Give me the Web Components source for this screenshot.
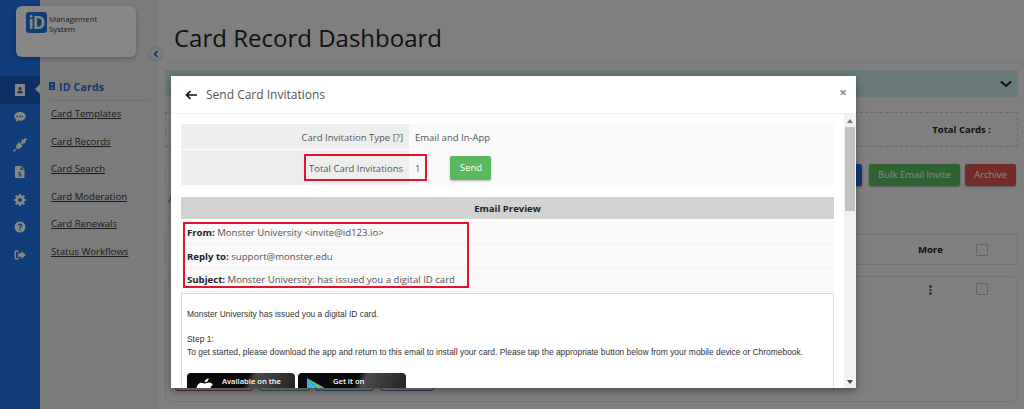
<!DOCTYPE html>
<html lang="en">
<head>
    <meta charset="UTF-8">
    <title>Card Record Dashboard</title>
    <style>
        html, body {
            margin: 0;
            height: 100%;
            overflow: hidden;
            font-family: "Open Sans", sans-serif;
            background: #f0f0f0;
        }
    </style>
</head>
<body>
    <admin-shell>
        <side-rail slot="rail"></side-rail>
        <sub-nav slot="nav"></sub-nav>
        <card-dashboard slot="main"></card-dashboard>
        <invite-modal slot="overlay"></invite-modal>
    </admin-shell>

    <!-- Page shell -->
    <template id="admin-shell-template">
        <style>
            :host { display: block; height: 409px; position: relative; overflow: hidden; }
            .grid { display: grid; grid-template-columns: 40px 117px 1fr; height: 100%; }
            .backdrop { position: absolute; inset: 0; background: rgba(0, 0, 0, .47); }
            .logo {
                position: absolute; left: 16px; top: 6px; width: 120px; height: 51px;
                box-sizing: border-box; padding: 6px 10px;
                display: flex; gap: 2px; align-items: flex-start;
                background: #fff; border-radius: 6px; box-shadow: 0 2px 5px rgba(0,0,0,.25);
            }
            .mark {
                width: 21px; height: 21px; border-radius: 3px; background: #1a75d2; color: #fff;
                font: 700 17px/21px "Open Sans", sans-serif; text-align: center; letter-spacing: -1px;
            }
            .logo span { font-size: 7.800px; line-height: 10px; color: #333; padding-top: 2px; }
            .toggle {
                position: absolute; left: 150px; top: 48px; width: 12px; height: 12px;
                border-radius: 50%; background: #e6eef8; box-shadow: 0 0 2px rgba(0,0,0,.4);
                display: flex; align-items: center; justify-content: center;
            }
        </style>
        <div class="grid">
            <slot name="rail"></slot>
            <slot name="nav"></slot>
            <slot name="main"></slot>
        </div>
        <div class="logo">
            <div class="mark">iD</div>
            <span>Management<br>System</span>
        </div>
        <div class="toggle">
            <svg width="6" height="8" viewBox="0 0 6 8"><path d="M4.500 1 1.500 4l3 3" fill="none" stroke="#1a5fc0" stroke-width="1.600"/></svg>
        </div>
        <div class="backdrop"></div>
        <slot name="overlay"></slot>
    </template>

    <!-- Icon rail -->
    <template id="side-rail-template">
        <style>
            :host { display: flex; flex-direction: column; background: #2273e8; padding-top: 76px; }
            .item { height: 27.500px; display: flex; align-items: center; justify-content: center; position: relative; }
            .item.active { background: #1a59b8; }
            .item.active::after {
                content: ""; position: absolute; right: 0; top: 8px;
                border: 5px solid transparent; border-right-color: #f0f0f0; border-left-width: 0;
            }
            svg { width: 12px; height: 12px; fill: #fff; display: block; }
            .plug { width: 14px; height: 14px; }
        </style>
        <div class="item active">
            <svg viewBox="0 0 12 12"><path fill-rule="evenodd" d="M2 0h8a1 1 0 0 1 1 1v10a1 1 0 0 1-1 1H2a1 1 0 0 1-1-1V1a1 1 0 0 1 1-1Zm4 3a1.600 1.600 0 1 0 0 3.200A1.600 1.600 0 0 0 6 3Zm-2.600 5v1.300h5.200V8c0-.7-1-1.200-2.600-1.200S3.400 7.300 3.400 8Z"/></svg>
        </div>
        <div class="item">
            <svg viewBox="0 0 12 12"><path fill-rule="evenodd" d="M6 1c3.200 0 5.700 1.900 5.700 4.400S9.200 9.700 6 9.700c-.6 0-1.200-.1-1.700-.2L1.600 11l.7-2.500C1 7.700.3 6.600.3 5.400.3 2.900 2.800 1 6 1ZM3.500 4.700a.8.8 0 1 0 0 1.500.8.8 0 0 0 0-1.500Zm2.500 0a.8.8 0 1 0 0 1.500.8.8 0 0 0 0-1.500Zm2.500 0a.8.8 0 1 0 0 1.500.8.8 0 0 0 0-1.500Z"/></svg>
        </div>
        <div class="item">
            <svg class="plug" viewBox="0 0 12 12"><path d="M10.700 0 12 1.300 10.300 3l.6.600-1.100 1.100-.4-.4-1.300 1.300-.8-.8L8.600 3.500 8.500 3.400 7.200 4.700l-.8-.8 1.300-1.300-.4-.4L8.400 1l.6.600ZM5.300 3.700l3 3-1.700 1.700c-1 1-2.300 1.200-3.300.6L1.200 12 0 10.800l3-2.100c-.6-1-.4-2.300.6-3.300Z"/></svg>
        </div>
        <div class="item">
            <svg viewBox="0 0 12 12"><path fill-rule="evenodd" d="M2 0h5l3.500 3.500V11a1 1 0 0 1-1 1H2a1 1 0 0 1-1-1V1a1 1 0 0 1 1-1Zm4.500 1v3H10ZM5.500 5.500v.7c-.8.1-1.300.6-1.300 1.200 0 1.400 2.300 1 2.300 1.700 0 .3-.3.4-.8.4-.4 0-.9-.1-1.300-.3v.9c.3.1.7.2 1.100.2v.7h.8v-.7c.8-.1 1.300-.6 1.300-1.300 0-1.400-2.300-1-2.300-1.600 0-.3.3-.4.7-.4.3 0 .7.100 1 .2v-.8c-.3-.1-.6-.2-.9-.2v-.7Z"/></svg>
        </div>
        <div class="item">
            <svg viewBox="0 0 12 12"><path fill-rule="evenodd" d="M5 0h2l.3 1.600 1 .4L9.700 1l1.300 1.300-1 1.400.4 1L12 5v2l-1.600.3-.4 1 1 1.400L9.700 11l-1.400-1-1 .4L7 12H5l-.3-1.600-1-.4-1.400 1L1 9.700l1-1.400-.4-1L0 7V5l1.600-.3.4-1-1-1.400L2.300 1l1.400 1 1-.4ZM6 4a2 2 0 1 0 0 4 2 2 0 0 0 0-4Z"/></svg>
        </div>
        <div class="item">
            <svg viewBox="0 0 12 12"><path fill-rule="evenodd" d="M6 .5a5.500 5.500 0 1 1 0 11 5.500 5.500 0 0 1 0-11Zm-.7 7.300v1.500h1.500V7.800Zm.8-5.300c-1.300 0-2.200.7-2.300 1.900l1.400.2c.1-.6.400-.9.900-.9.400 0 .7.300.7.600 0 .4-.2.600-.7 1-.6.500-.8.900-.8 1.800h1.400c0-.5.100-.7.600-1.100.7-.5 1-1 1-1.700 0-1.100-.9-1.800-2.200-1.800Z"/></svg>
        </div>
        <div class="item">
            <svg viewBox="0 0 12 12"><path d="M4.500 1.500H2a1.500 1.500 0 0 0-1.500 1.500v6A1.500 1.500 0 0 0 2 10.500h2.500V9H2V3h2.500ZM7.500 2 12 6l-4.500 4V7.700H4V4.300h3.500Z"/></svg>
        </div>
    </template>

    <!-- Section links -->
    <template id="sub-nav-template">
        <style>
            :host { display: block; background: #e9e9e9; padding: 79px 5px 0 9px; border-right: 1px solid #dcdcdc; box-sizing: border-box; }
            .head {
                display: flex; align-items: flex-start; gap: 4px; height: 21px; line-height: 16px;
                border-bottom: 1px solid #d2d2d2;
                font-size: 10.500px; font-weight: 700; color: #1f6ae0; letter-spacing: .2px;
            }
            .head svg { width: 6px; height: 8px; fill: #1f6ae0; margin-top: 3px; }
            a {
                display: block; margin: 0 0 0 2px; height: 27.500px;
                font-size: 9.600px; line-height: 26px; color: #333; text-decoration: underline;
            }
        </style>
        <div class="head">
            <svg viewBox="0 0 6 8"><path fill-rule="evenodd" d="M0 0h6v8H0Zm3 1.500a1 1 0 1 0 0 2 1 1 0 0 0 0-2ZM1.300 6.500h3.400V5.500H1.300Z"/></svg>
            ID Cards
        </div>
        <a>Card Templates</a>
        <a>Card Records</a>
        <a>Card Search</a>
        <a>Card Moderation</a>
        <a>Card Renewals</a>
        <a>Status Workflows</a>
    </template>

    <!-- Dashboard behind the dialog -->
    <template id="card-dashboard-template">
        <style>
            :host { display: block; padding: 0 6px 0 8px; background: #f0f0f0; color: #222; font-size: 9.500px; min-width: 0; }
            h1 {
                margin: 0 -6px 0 1px; padding-left: 8px; height: 63px; box-sizing: border-box;
                font-size: 24px; font-weight: 400; line-height: 76px; color: #222; border-bottom: 1px solid #e2e2e2;
            }
            .bar {
                margin-top: 7px; height: 27px; background: #c6e6e6;
                display: flex; align-items: center; justify-content: flex-end; padding-right: 6px;
            }
            .stats {
                margin-top: 15px; height: 35px; box-sizing: border-box; border: 1px dashed #c4c4c4;
                display: flex; align-items: center; justify-content: flex-end; padding-right: 26px;
                font-weight: 700;
            }
            .actions { margin-top: 17px; height: 22px; display: flex; gap: 5px; padding-right: 2px; }
            .actions .ghost { width: 40px; border: 1px solid #ddd; border-radius: 3px; margin-right: auto; box-sizing: border-box; }
            .actions div { border-radius: 2px; color: #fff; line-height: 22px; text-align: center; box-shadow: 0 1px 2px rgba(0,0,0,.3); }
            .actions .ghost { box-shadow: none; }
            .blue { background: #1f6ae0; width: 40px; margin-right: 2px; }
            .green { background: #5cb85c; width: 91px; }
            .red { background: #d9534f; width: 51px; }
            .link { height: 48px; box-sizing: border-box; padding: 6px 0 0 3px; color: #3366dd; line-height: 16px; }
            .thead {
                height: 31px; box-sizing: border-box; border: 1px solid #d9d9d9;
                display: grid; grid-template-columns: 1fr 58px 41px; align-items: center; font-weight: 700;
            }
            .tile {
                margin-top: 11px; height: 126px; box-sizing: border-box; border: 1px solid #d9d9d9; border-radius: 6px;
                display: flex; flex-direction: column; justify-content: space-between; padding: 6px 29px 10px 9px;
            }
            .tile .top { display: flex; justify-content: flex-end; align-items: flex-start; gap: 44px; }
            .box { width: 12px; height: 12px; box-sizing: border-box; border: 1px solid #bbb; border-radius: 1px; background: #f0f0f0; }
            .dots { width: 3px; padding-top: 2px; display: flex; flex-direction: column; gap: 1px; }
            .dots i { width: 3px; height: 2.500px; border-radius: 50%; background: #666; }
            .row { display: flex; gap: 5px; }
            .row div { height: 12px; border: 1px solid; border-radius: 3px; box-sizing: border-box; }
        </style>
        <h1>Card Record Dashboard</h1>
        <div class="bar">
            <svg width="12" height="8" viewBox="0 0 12 8"><path d="M1 1.500 6 6l5-4.500" fill="none" stroke="#222" stroke-width="2"/></svg>
        </div>
        <div class="stats">Total Cards :</div>
        <div class="actions">
            <div class="ghost"></div>
            <div class="blue"></div>
            <div class="green">Bulk Email Invite</div>
            <div class="red">Archive</div>
        </div>
        <div class="link">A</div>
        <div class="thead"><span></span><span>More</span><span class="box"></span></div>
        <div class="tile">
            <div class="top">
                <div class="dots"><i></i><i></i><i></i></div>
                <div class="box"></div>
            </div>
            <div class="row">
                <div style="width:78px;border-color:#c44"></div>
                <div style="width:51px;border-color:#5a9;margin-left:1px"></div>
                <div style="width:59px;border-color:#48c"></div>
                <div style="width:54px;border-color:#66c;margin-left:1px"></div>
            </div>
        </div>
    </template>

    <!-- Send invitations dialog -->
    <template id="invite-modal-template">
        <style>
            :host {
                position: absolute; left: 171px; top: 76px; width: 685px; height: 312px;
                background: #fff; display: flex; flex-direction: column; color: #555;
                box-shadow: 0 3px 8px rgba(0,0,0,.4);
            }
            header {
                flex: 0 0 38px; box-sizing: border-box; border-bottom: 1px solid #eee;
                display: flex; align-items: center; padding: 0 9px 0 14px;
                font-size: 12px; color: #555;
            }
            header svg { margin-right: 9px; }
            header .x { margin-left: auto; font-size: 13px; font-weight: 700; color: #888; line-height: 13px; margin-bottom: 4px; }
            .scroller { flex: 1; display: flex; min-height: 0; }
            .content { flex: 1; min-width: 0; padding: 10px 10px 0; overflow: hidden; }
            .track { flex: 0 0 12px; background: #f1f1f1; display: flex; flex-direction: column; align-items: center; }
            .track .up, .track .down { flex: 0 0 13px; display: flex; align-items: center; }
            .track .thumb { width: 10px; height: 84px; background: #c1c1c1; flex: none; }
            .track .gap { flex: 1; }
        </style>
        <header>
            <svg width="12" height="10" viewBox="0 0 12 10"><path d="M5.500 1 1.500 5l4 4M1.500 5H12" fill="none" stroke="#111" stroke-width="1.700"/></svg>
            Send Card Invitations
            <span class="x">×</span>
        </header>
        <div class="scroller">
            <div class="content">
                <invite-summary></invite-summary>
                <email-preview></email-preview>
            </div>
            <div class="track">
                <div class="up"><svg width="6" height="4" viewBox="0 0 6 4"><path d="M3 0 6 4H0Z" fill="#777"/></svg></div>
                <div class="thumb"></div>
                <div class="gap"></div>
                <div class="down"><svg width="6" height="4" viewBox="0 0 6 4"><path d="M0 0h6L3 4Z" fill="#444"/></svg></div>
            </div>
        </div>
    </template>

    <!-- Type / count table -->
    <template id="invite-summary-template">
        <style>
            :host {
                display: grid; grid-template-columns: 228px 1fr; grid-template-rows: 25px 35px; row-gap: 1px;
                font-size: 9.500px; line-height: 15px; color: #555; position: relative;
            }
            .k { background: #eee; display: flex; align-items: center; justify-content: flex-end; padding: 2px 6px 0 0; }
            .v { background: #f9f9f9; display: flex; align-items: center; padding: 2px 0 0 6px; }
            .send {
                margin: -2px 0 0 30px; width: 41px; height: 24px; background: #5cb85c; color: #fff; border-radius: 2px;
                text-align: center; line-height: 24px; box-shadow: 0 1px 2px rgba(0,0,0,.25);
            }
            .mark { position: absolute; left: 123px; top: 30px; width: 123px; height: 27px; box-sizing: border-box; border: 2px solid #e3142d; }
        </style>
        <div class="k">Card Invitation Type [?]</div>
        <div class="v">Email and In-App</div>
        <div class="k">Total Card Invitations</div>
        <div class="v">1<div class="send">Send</div></div>
        <div class="mark"></div>
    </template>

    <!-- Email preview -->
    <template id="email-preview-template">
        <style>
            :host { display: block; margin-top: 12px; font-size: 9.600px; color: #555; position: relative; }
            .title { height: 22px; background: #d2d2d2; text-align: center; font-weight: 700; line-height: 23px; color: #222; margin-bottom: 2px; font-size: 9.500px; }
            .line { height: 23.500px; background: #f9f9f9; border-bottom: 1px solid #f1f1f1; line-height: 23px; padding-left: 6px; box-sizing: border-box; }
            .line b { color: #222; }
            .mark { position: absolute; left: 2px; top: 25px; width: 286px; height: 66px; box-sizing: border-box; border: 2px solid #e3142d; }
            .mail {
                margin-top: 1.500px; height: 150px; box-sizing: border-box; border: 1px solid #ddd; padding: 14px 5px 0;
                font: 8.440px/13px "Liberation Sans", Arial, sans-serif; color: #333;
            }
            p { margin: 0 0 12px; }
            .stores { display: flex; gap: 3px; margin-top: 14px; }
        </style>
        <div class="title">Email Preview</div>
        <div class="line"><b>From:</b> Monster University &lt;invite@id123.io&gt;</div>
        <div class="line"><b>Reply to:</b> support@monster.edu</div>
        <div class="line"><b>Subject:</b> Monster University: has issued you a digital ID card</div>
        <div class="mark"></div>
        <div class="mail">
            <p>Monster University has issued you a digital ID card.</p>
            <p>Step 1:<br>To get started, please download the app and return to this email to install your card. Please tap the appropriate button below from your mobile device or Chromebook.</p>
            <div class="stores">
                <store-badge top="Available on the" bottom="App Store" kind="apple"></store-badge>
                <store-badge top="Get it on" bottom="Google Play" kind="play"></store-badge>
            </div>
        </div>
    </template>

    <!-- App store badge -->
    <template id="store-badge-template">
        <style>
            :host {
                display: flex; width: 108px; height: 36px; border-radius: 4px; box-sizing: border-box;
                background: linear-gradient(115deg, #0a0a0a 50%, #4a4a4a 56%, #1c1c1c 100%);
                color: #fff; font: 600 7.600px/11px "Open Sans", sans-serif; overflow: hidden;
            }
            .art { flex: none; width: 35px; padding: 5px 0 0 9px; box-sizing: border-box; }
            .txt { padding-top: 3px; white-space: nowrap; }
            .big { font-size: 14px; line-height: 18px; }
        </style>
        <div class="art"></div>
        <div class="txt"><div class="small"></div><div class="big"></div></div>
    </template>

    <script>
        // Every element just clones its template into an open shadow root
        class TemplateElement extends HTMLElement {
            constructor() {
                super();
                this.attachShadow({ mode: 'open' });
            }

            connectedCallback() {
                const template = document.getElementById(this.localName + '-template');
                this.shadowRoot.appendChild(template.content.cloneNode(true));
            }
        }

        class AdminShell extends TemplateElement {}
        class SideRail extends TemplateElement {}
        class SubNav extends TemplateElement {}
        class CardDashboard extends TemplateElement {}
        class InviteModal extends TemplateElement {}
        class InviteSummary extends TemplateElement {}
        class EmailPreview extends TemplateElement {}

        // Store badge reads its labels from attributes
        class StoreBadge extends TemplateElement {
            connectedCallback() {
                super.connectedCallback();
                this.shadowRoot.querySelector('.small').textContent = this.getAttribute('top');
                this.shadowRoot.querySelector('.big').textContent = this.getAttribute('bottom');
                const art = this.getAttribute('kind') === 'apple'
                    ? '<svg width="18" height="22" viewBox="0 0 20 24"><path fill="#fff" d="M14 0c.2 2.500-2 4.800-4.300 4.600C9.500 2.300 11.700.2 14 0ZM10 6c1 0 2.500-1.100 4.400-1.100 1.700 0 3.300.8 4.300 2.300-3.700 2.100-3.100 7.300.9 8.800-.9 2.300-3 6-5.200 6-1.500 0-2-.9-3.800-.9s-2.400.9-3.800.9C4 22 .5 16.500.5 12c0-4.400 2.800-7 5.400-7C7.800 5 9 6 10 6Z"/></svg>'
                    : '<svg width="20" height="24" viewBox="0 0 20 24"><path fill="#3db4e8" d="M0 0v24l11-12Z"/><path fill="#f5b14c" d="M11 12l5-3 4 3-4 3Z"/><path fill="#5bc08a" d="M0 0l16 9-5 3Z"/><path fill="#e2574c" d="M0 24l16-9-5-3Z"/></svg>';
                this.shadowRoot.querySelector('.art').innerHTML = art;
            }
        }

        // Define custom elements
        customElements.define('admin-shell', AdminShell);
        customElements.define('side-rail', SideRail);
        customElements.define('sub-nav', SubNav);
        customElements.define('card-dashboard', CardDashboard);
        customElements.define('invite-modal', InviteModal);
        customElements.define('invite-summary', InviteSummary);
        customElements.define('email-preview', EmailPreview);
        customElements.define('store-badge', StoreBadge);
    </script>
</body>
</html>
